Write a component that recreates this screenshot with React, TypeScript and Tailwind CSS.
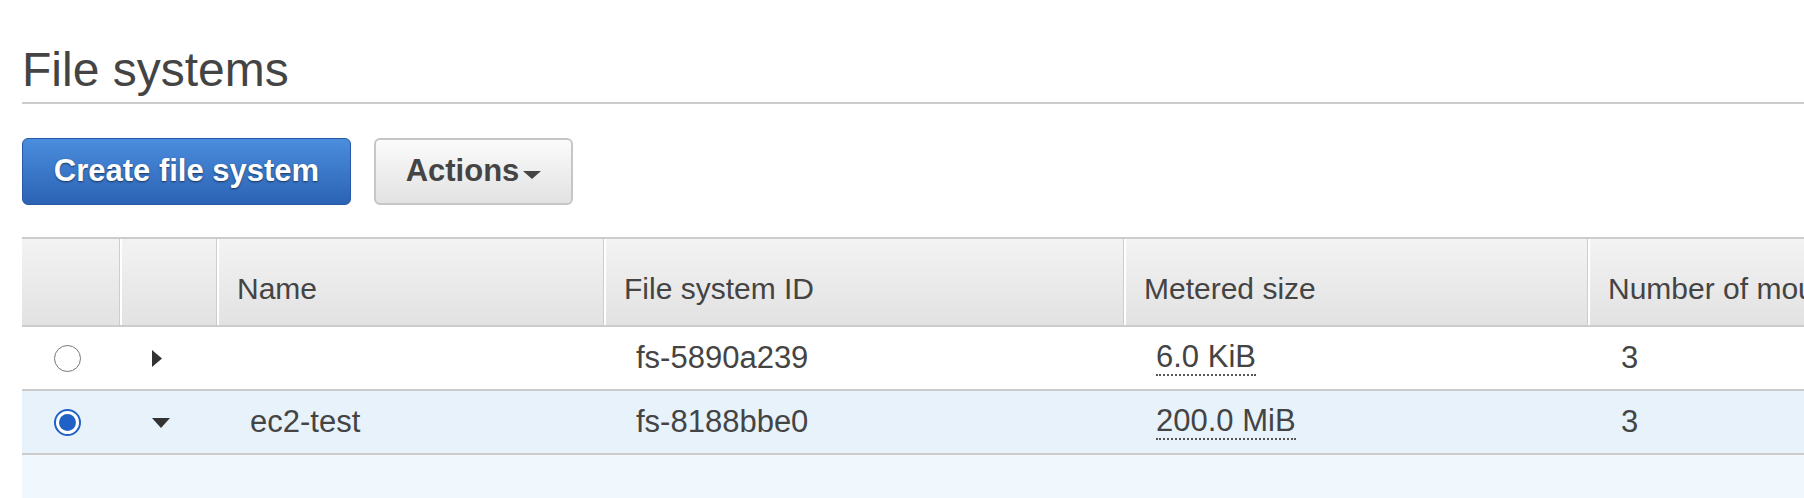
const rows = [
  { id: 'fs-5890a239', name: '', size: '6.0 KiB', mounts: '3', selected: false },
  { id: 'fs-8188bbe0', name: 'ec2-test', size: '200.0 MiB', mounts: '3', selected: true },
]

const cols = 'grid grid-cols-[98px_97px_387px_520px_464px_560px]'

function Radio({ checked }: { checked: boolean }) {
  if (checked) {
    return (
      <span className="flex h-[27px] w-[27px] items-center justify-center rounded-full border-[2.5px] border-[#2161c6] bg-white">
        <span className="h-[17px] w-[17px] rounded-full bg-[#2161c6]" />
      </span>
    )
  }
  return <span className="block h-[27px] w-[27px] rounded-full border-[1.5px] border-[#777] bg-white" />
}

function Caret({ open }: { open: boolean }) {
  if (open) {
    return (
      <svg width="18" height="10" viewBox="0 0 18 10" className="mt-[2px]">
        <path d="M0 0h18L9 10z" fill="#333" />
      </svg>
    )
  }
  return (
    <svg width="10" height="17" viewBox="0 0 10 17">
      <path d="M0 0l10 8.5L0 17z" fill="#333" />
    </svg>
  )
}

function HeaderCell({ label, first }: { label?: string; first?: boolean }) {
  return (
    <div
      className={
        first
          ? 'flex items-end pb-[19px]'
          : 'flex items-end overflow-hidden whitespace-nowrap border-l-2 border-l-white pb-[19px] pl-[18px] shadow-[-1px_0_0_#cdcdcd]'
      }
    >
      {label && <span className="text-[30px] leading-[34px]">{label}</span>}
    </div>
  )
}

export default function App() {
  return (
    <div className="min-h-screen overflow-hidden bg-white font-['Liberation_Sans',Arial,sans-serif] text-[#444]">
      <div className="pl-[22px] pt-[46px]">
        <h1 className="text-[48px] font-normal leading-[48px]">File systems</h1>
        <div className="mt-[8px] h-[2px] bg-[#cccccc]" />

        <div className="mt-[34px] flex gap-[23px]">
          <button
            type="button"
            className="flex h-[67px] w-[329px] items-center justify-center rounded-[6px] border border-[#2559a8] bg-gradient-to-b from-[#4b8ddd] to-[#2c63b4] text-[31px] font-bold text-white [text-shadow:0_1px_2px_rgba(0,0,0,0.55)]"
          >
            Create file system
          </button>
          <button
            type="button"
            className="flex h-[67px] w-[199px] items-center justify-center gap-[4px] rounded-[6px] border-2 border-[#c6c6c6] bg-gradient-to-b from-[#fbfbfb] to-[#e2e2e2] text-[31px] font-bold text-[#444]"
          >
            Actions
            <svg width="18" height="8" viewBox="0 0 18 8" className="mt-[6px]">
              <path d="M0 0h18L9 8z" fill="#444" />
            </svg>
          </button>
        </div>

        <div className="mt-[32px] w-max">
          <div className={`${cols} h-[90px] border-y-2 border-[#cccccc] bg-gradient-to-b from-[#f3f3f3] to-[#e2e2e2]`}>
            <HeaderCell first />
            <HeaderCell />
            <HeaderCell label="Name" />
            <HeaderCell label="File system ID" />
            <HeaderCell label="Metered size" />
            <HeaderCell label="Number of mount targets" />
          </div>

          {rows.map((r) => (
            <div
              key={r.id}
              className={`${cols} h-[64px] border-b-2 border-[#cccccc] text-[31px] ${r.selected ? 'bg-[#e8f2fb]' : 'bg-white'}`}
            >
              <div className="flex items-center pl-[32px]">
                <Radio checked={r.selected} />
              </div>
              <div className="flex items-center pl-[32px]">
                <Caret open={r.selected} />
              </div>
              <div className="flex items-center pl-[33px]">{r.name}</div>
              <div className="flex items-center pl-[32px]">{r.id}</div>
              <div className="flex items-center pl-[32px]">
                <span className="border-b-2 border-dotted border-[#555] pb-[2px] leading-none">{r.size}</span>
              </div>
              <div className="flex items-center pl-[33px]">{r.mounts}</div>
            </div>
          ))}

          <div className="h-[60px] bg-[#f0f7fd]" />
        </div>
      </div>
    </div>
  )
}
